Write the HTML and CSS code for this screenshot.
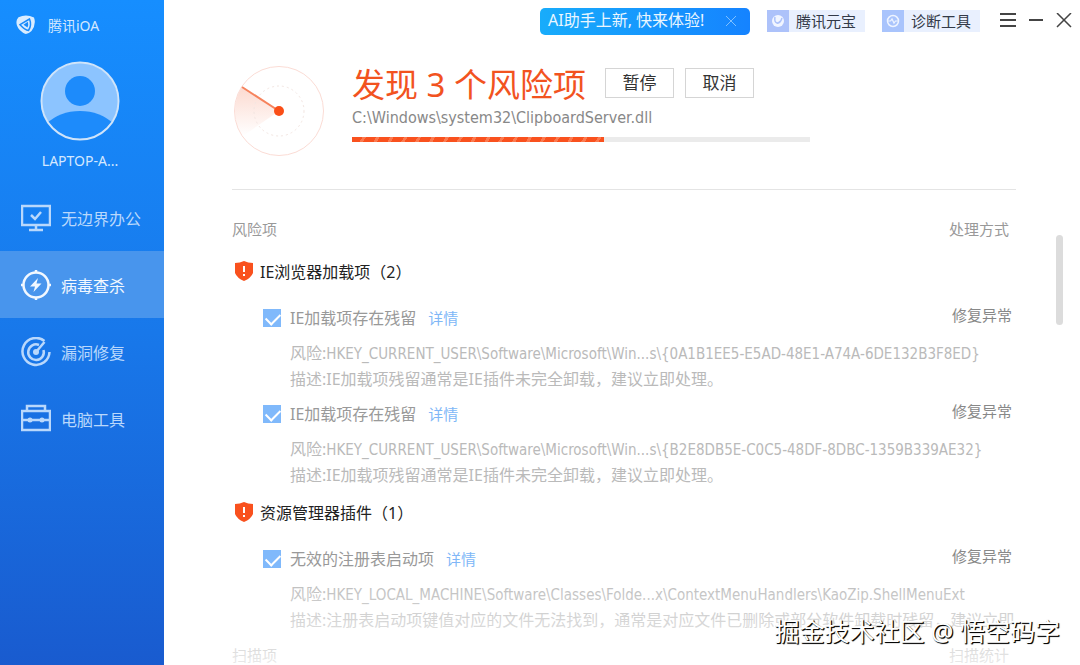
FILE: index.html
```
<!DOCTYPE html>
<html lang="zh-CN">
<head>
    <meta charset="UTF-8">
    <meta name="viewport" content="width=device-width, initial-scale=1.0">
    <title>腾讯iOA</title>
    <link rel="stylesheet" href="styles.css">
</head>
<body>
    <div class="app">
        <!-- Sidebar -->
        <aside class="sidebar">
            <div class="brand">
                <svg class="brand-logo" viewBox="0 0 20 20">
                    <path d="M2.500 2.300Q10-1.300 18 2.500Q20.500 9.500 15.500 16Q10.500 20.800 7 17.800Q-1.500 11.500 1 4.500Z" fill="#d9ecff"/>
                    <path d="M13.500 4L4 9.700Q9 15 12.500 15.500Q16 10 13.500 4Z" fill="none" stroke="#1a8bfb" stroke-width="1.500"/>
                    <path d="M11.800 6.800L7.500 9.800L11.500 12.500Q12.800 10 11.800 6.800Z" fill="#1a8bfb"/>
                </svg>
                <span>腾讯iOA</span>
            </div>
            <div class="user">
                <svg class="avatar" viewBox="0 0 80 80">
                    <defs><clipPath id="avatarClip"><circle cx="40" cy="40" r="38"/></clipPath></defs>
                    <circle cx="40" cy="40" r="38" fill="#8cc4ff"/>
                    <g clip-path="url(#avatarClip)" fill="#1d8bfb">
                        <circle cx="40" cy="30" r="15"/>
                        <path d="M6 63Q20 50 40 50T74 63V80H6Z"/>
                    </g>
                    <circle cx="40" cy="40" r="38.500" fill="none" stroke="#cfe4fa" stroke-width="2"/>
                </svg>
                <span>LAPTOP-A...</span>
            </div>
            <nav class="nav">
                <a href="#office">
                    <svg viewBox="0 0 30 30">
                        <path d="M1 3H29V22H1ZM15 22V27M8 27H22"/>
                        <path d="M10 12L14 16L20 9"/>
                    </svg>
                    无边界办公
                </a>
                <a href="#virus" class="active">
                    <svg viewBox="0 0 30 30">
                        <circle cx="15" cy="15" r="12.500"/>
                        <path d="M15 0V3M15 27V30M0 15H3M27 15H30"/>
                        <path class="solid" d="M17 8L9 16.500H14L12.500 22L20.500 13.500H15.500Z"/>
                    </svg>
                    病毒查杀
                </a>
                <a href="#repair">
                    <svg viewBox="0 0 30 30">
                        <path d="M23.500 4A13.500 13.500 0 1 0 28.500 15"/>
                        <path d="M18 8A7.800 7.800 0 1 0 22.500 13"/>
                        <path d="M15 15L23.500 5"/>
                        <circle class="solid" cx="15" cy="15" r="3"/>
                    </svg>
                    漏洞修复
                </a>
                <a href="#tools">
                    <svg viewBox="0 0 30 30">
                        <path d="M1 7H29V26H1ZM6 7V2H24V7"/>
                        <path d="M1 16H29"/>
                        <circle class="solid" cx="9" cy="16" r="2.500"/>
                        <circle class="solid" cx="21" cy="16" r="2.500"/>
                    </svg>
                    电脑工具
                </a>
            </nav>
        </aside>

        <main class="main">
            <!-- Title bar -->
            <header class="topbar">
                <div class="promo">
                    <a href="#assistant">AI助手上新, 快来体验!</a>
                    <button type="button" aria-label="关闭提示">
                        <svg viewBox="0 0 12 12"><path d="M1 1L11 11M11 1L1 11"/></svg>
                    </button>
                </div>
                <a class="tool" href="#yuanbao">
                    <svg viewBox="0 0 22 22">
                        <rect width="22" height="22" fill="#adc2fa"/>
                        <circle cx="11" cy="11" r="6" fill="#f1f5ff"/>
                        <path d="M8 7Q7 12 10 13T15 8M10 13Q12 13 13 11" fill="none" stroke="#adc2fa" stroke-width="1.500"/>
                    </svg>
                    <span>腾讯元宝</span>
                </a>
                <a class="tool" href="#diagnose">
                    <svg viewBox="0 0 22 22">
                        <rect width="22" height="22" fill="#a9c4fc"/>
                        <circle cx="11" cy="11" r="5.500" fill="none" stroke="#eef4ff" stroke-width="1.500"/>
                        <path d="M6 11H8.500L10 9L12 13L13.500 11H16" fill="none" stroke="#eef4ff" stroke-width="1.200"/>
                    </svg>
                    <span>诊断工具</span>
                </a>
                <div class="window-buttons">
                    <button type="button" aria-label="菜单"><svg viewBox="0 0 16 16"><path d="M0 1H16M0 7H16M0 13H16"/></svg></button>
                    <button type="button" aria-label="最小化"><svg viewBox="0 0 16 16"><path d="M1 7H15"/></svg></button>
                    <button type="button" aria-label="关闭"><svg viewBox="0 0 16 16"><path class="thin" d="M1 0L15 14M15 0L1 14"/></svg></button>
                </div>
            </header>

            <!-- Scan progress -->
            <section class="scan">
                <svg class="radar" viewBox="0 0 90 90">
                    <defs>
                        <linearGradient id="sweep" x1="0" y1="0" x2="0" y2="1">
                            <stop offset="0" stop-color="#fcdad0"/>
                            <stop offset="1" stop-color="#ffffff"/>
                        </linearGradient>
                    </defs>
                    <path d="M45 45L8 21A44 44 0 0 0 9 70Z" fill="url(#sweep)"/>
                    <circle cx="45" cy="45" r="44.500" fill="none" stroke="#fbdcd5"/>
                    <circle cx="45" cy="45" r="25" fill="none" stroke="#f3e6e2" stroke-dasharray="2 3"/>
                    <path d="M8 21L45 45" stroke="#f6835d" stroke-width="2"/>
                    <circle cx="45" cy="45" r="5" fill="#fa4e17"/>
                </svg>
                <div class="scan-info">
                    <div class="scan-title">
                        <h1>发现 3 个风险项</h1>
                        <button type="button">暂停</button>
                        <button type="button">取消</button>
                    </div>
                    <p class="scan-path">C:\Windows\system32\ClipboardServer.dll</p>
                    <div class="progress"><div class="progress-fill" style="width: 55%"></div></div>
                </div>
            </section>

            <!-- Results -->
            <section class="results">
                <div class="list">
                    <div class="list-head"><span>风险项</span><span>处理方式</span></div>

                    <h2>
                        <svg viewBox="0 0 18 20"><path d="M9 0Q13 2 18 2V12Q16 17 9 20Q2 17 0 12V2Q5 2 9 0Z" fill="#f9511e"/><path d="M9 5V11M9 13V15" stroke="#fff" stroke-width="2"/></svg>
                        IE浏览器加载项（2）
                    </h2>
                    <div class="item">
                        <input type="checkbox" id="risk1" checked>
                        <div class="item-title"><label for="risk1">IE加载项存在残留</label><a href="#risk1">详情</a></div>
                        <span class="action">修复异常</span>
                        <p>风险:<span class="risk-path">HKEY_CURRENT_USER\Software\Microsoft\Win...s\{0A1B1EE5-E5AD-48E1-A74A-6DE132B3F8ED}</span></p>
                        <p>描述:IE加载项残留通常是IE插件未完全卸载，建议立即处理。</p>
                    </div>
                    <div class="item">
                        <input type="checkbox" id="risk2" checked>
                        <div class="item-title"><label for="risk2">IE加载项存在残留</label><a href="#risk2">详情</a></div>
                        <span class="action">修复异常</span>
                        <p>风险:<span class="risk-path">HKEY_CURRENT_USER\Software\Microsoft\Win...s\{B2E8DB5E-C0C5-48DF-8DBC-1359B339AE32}</span></p>
                        <p>描述:IE加载项残留通常是IE插件未完全卸载，建议立即处理。</p>
                    </div>

                    <h2>
                        <svg viewBox="0 0 18 20"><path d="M9 0Q13 2 18 2V12Q16 17 9 20Q2 17 0 12V2Q5 2 9 0Z" fill="#f9511e"/><path d="M9 5V11M9 13V15" stroke="#fff" stroke-width="2"/></svg>
                        资源管理器插件（1）
                    </h2>
                    <div class="item">
                        <input type="checkbox" id="risk3" checked>
                        <div class="item-title"><label for="risk3">无效的注册表启动项</label><a href="#risk3">详情</a></div>
                        <span class="action">修复异常</span>
                        <p>风险:<span class="risk-path">HKEY_LOCAL_MACHINE\Software\Classes\Folde...x\ContextMenuHandlers\KaoZip.ShellMenuExt</span></p>
                        <p>描述:注册表启动项键值对应的文件无法找到，通常是对应文件已删除或部分软件卸载时残留，建议立即</p>
                    </div>

                    <div class="list-head scan-head"><span>扫描项</span><span>扫描统计</span></div>
                </div>
                <div class="scrollbar"></div>
                <div class="fade"></div>
            </section>
        </main>
        <div class="watermark">掘金技术社区 @ 悟空码字</div>
    </div>
</body>
</html>
```
FILE: styles.css
```
* {
    box-sizing: border-box;
}

body {
    margin: 0;
    font-family: "Noto Sans", "Noto Sans CJK SC", sans-serif;
    font-size: 16px;
    color: #222;
    background: #fff;
}

h1, h2, p {
    margin: 0;
    font-weight: 400;
}

a {
    text-decoration: none;
}

button {
    font-family: inherit;
    padding: 0;
    cursor: pointer;
}

.app {
    position: relative;
    display: flex;
    height: 100vh;
    overflow: hidden;
}

/* Sidebar */
.sidebar {
    flex: 0 0 164px;
    background: linear-gradient(#168eff, #1878ea 50%, #195bcf);
    color: #d4e8ff;
}

.brand {
    display: flex;
    align-items: center;
    gap: 12px;
    height: 50px;
    padding-left: 16px;
    font-size: 14px;
}

.brand-logo {
    width: 20px;
    height: 20px;
}

.user {
    display: flex;
    flex-direction: column;
    align-items: center;
    gap: 10px;
    height: 134px;
    padding-top: 11px;
    padding-right: 4px;
    font-size: 14px;
    line-height: 20px;
}

.avatar {
    width: 80px;
    height: 80px;
}

.nav a {
    display: flex;
    align-items: center;
    gap: 10px;
    height: 67px;
    padding-left: 21px;
    color: #b9d8fc;
}

.nav a.active {
    background: #4895ed;
    color: #f2f8ff;
}

.nav svg {
    width: 30px;
    height: 30px;
    fill: none;
    stroke: currentColor;
    stroke-width: 2.5;
}

.nav .solid {
    fill: currentColor;
    stroke: none;
}

.main {
    flex: 1;
    min-width: 0;
    display: flex;
    flex-direction: column;
}

/* Title bar */
.topbar {
    display: flex;
    justify-content: flex-end;
    align-items: center;
    gap: 17px;
    height: 42px;
    padding-right: 8px;
}

.promo {
    display: flex;
    align-items: center;
    justify-content: space-between;
    width: 210px;
    height: 27px;
    padding: 0 13px 0 8px;
    border-radius: 5px;
    background: linear-gradient(90deg, #18acfb, #1583ff);
}

.promo a {
    color: #e9f6ff;
    line-height: 24px;
    height: 27px;
    white-space: nowrap;
}

.promo button {
    display: flex;
    border: none;
    background: none;
}

.promo svg {
    width: 12px;
    height: 12px;
    stroke: #7fc0ff;
}

.tool {
    display: flex;
    align-items: center;
    gap: 7px;
    width: 98px;
    height: 22px;
    background: #e9f0fe;
    color: #333a48;
    font-size: 15px;
    line-height: 20px;
}

.tool svg {
    width: 22px;
    height: 22px;
}

.window-buttons {
    display: flex;
    gap: 12px;
    padding-left: 3px;
}

.window-buttons button {
    display: flex;
    border: none;
    background: none;
}

.window-buttons svg {
    width: 16px;
    height: 16px;
    stroke: #444;
    stroke-width: 2;
}

.window-buttons .thin {
    stroke-width: 1.5;
}

/* Scan progress */
.scan {
    display: flex;
    gap: 28px;
    height: 148px;
    margin: 0 64px 0 68px;
    padding: 24px 0 0 2px;
    border-bottom: 1px solid #e4e4e4;
}

.radar {
    width: 90px;
    height: 90px;
}

.scan-info {
    flex: 1;
}

.scan-title {
    display: flex;
    align-items: center;
    height: 34px;
}

.scan-title h1 {
    margin-right: 19px;
    color: #f2531f;
    font-size: 33px;
    line-height: 38px;
    padding-top: 3px;
    white-space: nowrap;
}

.scan-title button {
    width: 69px;
    height: 30px;
    margin-right: 11px;
    border: 1px solid #d5d5d5;
    background: #fff;
    color: #333;
    font-size: 17px;
    line-height: 28px;
}

.scan-path {
    margin-top: 7px;
    color: #888;
    font-family: "DejaVu Sans Condensed", "Noto Sans CJK SC", sans-serif;
    line-height: 22px;
}

.progress {
    width: 69%;
    height: 5px;
    margin-top: 8px;
    background: #ebebeb;
}

.progress-fill {
    height: 100%;
    background: repeating-linear-gradient(120deg, #f9511e 0 9px, #fb7a50 9px 12px);
}

/* Results */
.results {
    position: relative;
    flex: 1;
    min-height: 0;
    display: flex;
    gap: 40px;
    padding: 0 17px 0 68px;
    overflow: hidden;
}

.list {
    flex: 1;
    min-width: 0;
    padding-top: 28px;
}

.list-head {
    display: flex;
    justify-content: space-between;
    padding-right: 7px;
    color: #999;
    font-size: 15px;
    line-height: 22px;
}

h2 {
    display: flex;
    align-items: center;
    gap: 7px;
    height: 24px;
    margin: 3px 0 22px 3px;
    font-size: 16px;
}

.list-head + h2 {
    margin-top: 19px;
}

h2 svg {
    width: 18px;
    height: 20px;
}

.item {
    display: grid;
    grid-template-columns: 18px 1fr auto;
    column-gap: 9px;
    padding: 0 0 9px 31px;
    line-height: 26px;
}

.item input {
    appearance: none;
    width: 18px;
    height: 18px;
    margin: 4px 0;
    background: #80b9fb;
}

.item input:checked::before {
    content: "";
    display: block;
    width: 12px;
    height: 7px;
    margin: 4px 0 0 3px;
    border: solid #fff;
    border-width: 0 0 2px 2px;
    transform: rotate(-45deg);
}

.item-title {
    display: flex;
    gap: 12px;
    height: 35px;
    color: #999;
}

.item-title a {
    color: #80b7f7;
    font-size: 15px;
}

.action {
    padding-right: 4px;
    color: #888;
    font-size: 15px;
    line-height: 20px;
}

.item p {
    grid-column: 2 / 4;
    min-width: 0;
    height: 26px;
    color: #bababa;
    white-space: nowrap;
    overflow: hidden;
}

.risk-path {
    font-family: "DejaVu Sans Condensed", sans-serif;
    font-size: 15px;
}

.scan-head {
    margin-top: 2px;
}

.scrollbar {
    flex: 0 0 7px;
    height: 90px;
    margin-top: 45px;
    border-radius: 4px;
    background: #dcdcdc;
}

.fade {
    position: absolute;
    left: 0;
    right: 0;
    bottom: 0;
    height: 90px;
    background: linear-gradient(rgba(255, 255, 255, 0), rgba(255, 255, 255, 0.8));
    pointer-events: none;
}

.watermark {
    position: absolute;
    right: 20px;
    bottom: 16px;
    color: #fff;
    font-size: 25px;
    line-height: 36px;
    text-shadow: 1px 1px 1px #000, 1px 1px 0 #333;
}
```
